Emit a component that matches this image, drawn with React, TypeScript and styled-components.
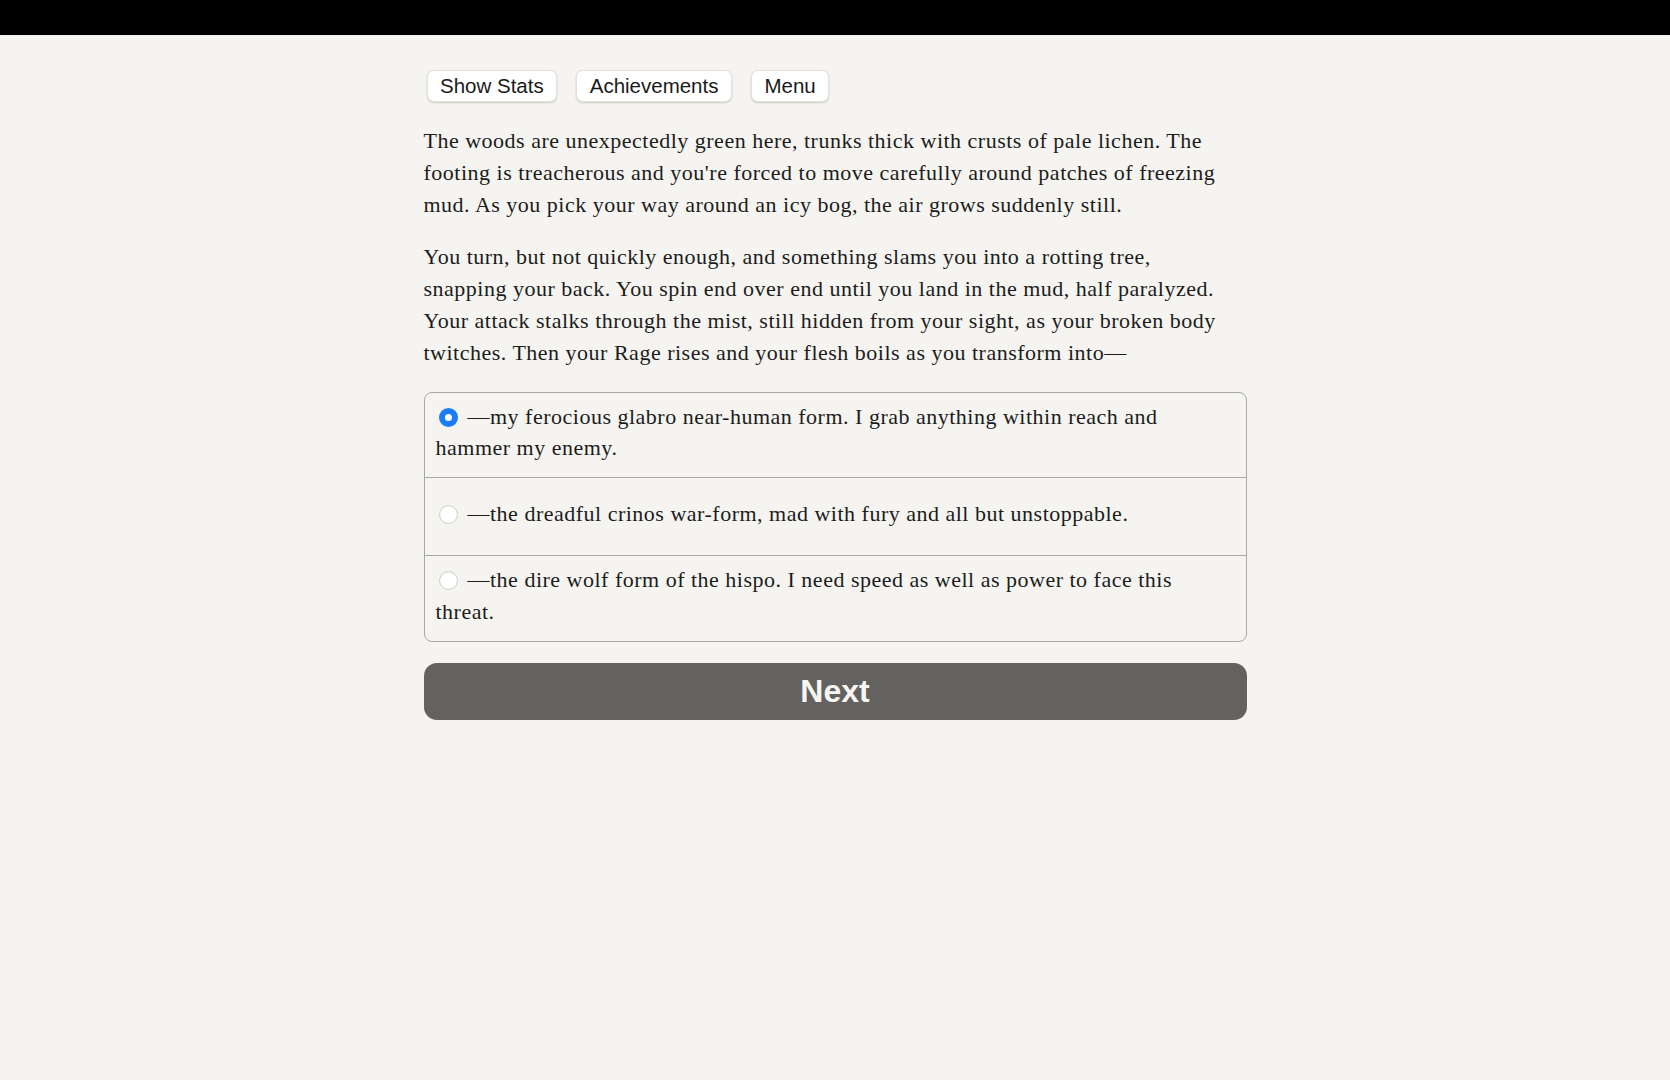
import React, { useState } from "react";
import styled, { createGlobalStyle } from "styled-components";

const GlobalStyle = createGlobalStyle`
  html, body {
    margin: 0;
    padding: 0;
    background: #f5f4f0;
  }
  body {
    font-family: "Liberation Serif", serif;
    color: #1c1c1c;
  }
`;

const choices = [
  "—my ferocious glabro near-human form. I grab anything within reach and hammer my enemy.",
  "—the dreadful crinos war-form, mad with fury and all but unstoppable.",
  "—the dire wolf form of the hispo. I need speed as well as power to face this threat.",
];

export default function App() {
  const [selected, setSelected] = useState(0);

  return (
    <>
      <GlobalStyle />
      <TopBar />
      <Page>
        <Toolbar>
          <ToolButton>Show Stats</ToolButton>
          <ToolButton>Achievements</ToolButton>
          <ToolButton>Menu</ToolButton>
        </Toolbar>
        <Story>
          <Paragraph>
            The woods are unexpectedly green here, trunks thick with crusts of pale lichen. The
            footing is treacherous and you're forced to move carefully around patches of freezing
            mud. As you pick your way around an icy bog, the air grows suddenly still.
          </Paragraph>
          <Paragraph>
            You turn, but not quickly enough, and something slams you into a rotting tree,
            snapping your back. You spin end over end until you land in the mud, half paralyzed.
            Your attack stalks through the mist, still hidden from your sight, as your broken body
            twitches. Then your Rage rises and your flesh boils as you transform into—
          </Paragraph>
        </Story>
        <ChoiceList>
          {choices.map((text, i) => (
            <Choice key={i} onClick={() => setSelected(i)}>
              <ChoiceText>
                <Radio $checked={selected === i} />
                {text}
              </ChoiceText>
            </Choice>
          ))}
        </ChoiceList>
        <NextButton>Next</NextButton>
      </Page>
    </>
  );
}

const TopBar = styled.div`
  height: 35px;
  background: #000;
`;

const Page = styled.main`
  max-width: 823px;
  margin: 0 auto;
  padding-top: 35px;
`;

const Toolbar = styled.div`
  display: flex;
  gap: 19px;
  padding-left: 3px;
`;

const ToolButton = styled.button`
  height: 32px;
  padding: 0 12.5px;
  background: #fff;
  border: 1px solid #e4e2dd;
  border-radius: 7px;
  box-shadow: 0 1px 2px rgba(0, 0, 0, 0.18);
  font-family: "Liberation Sans", Arial, sans-serif;
  font-size: 20.5px;
  color: #1a1a1a;
  cursor: pointer;
`;

const Story = styled.div`
  margin-top: 23px;
  padding-right: 10px;
`;

const Paragraph = styled.p`
  margin: 0 0 21px;
  font-size: 22px;
  line-height: 31.8px;
  letter-spacing: 0.5px;
`;

const ChoiceList = styled.div`
  margin-top: 23px;
  border: 1px solid #a8a8a6;
  border-radius: 8px;
  overflow: hidden;
`;

const Choice = styled.label`
  display: flex;
  align-items: center;
  min-height: 78px;
  box-sizing: border-box;
  padding: 8px 11px 13px;
  cursor: pointer;

  & + & {
    border-top: 1px solid #a8a8a6;
  }
`;

const ChoiceText = styled.div`
  font-size: 22px;
  line-height: 31.8px;
  letter-spacing: 0.5px;
`;

const Radio = styled.span<{ $checked: boolean }>`
  display: inline-block;
  box-sizing: border-box;
  width: 19px;
  height: 19px;
  margin: 0 10px 0 3px;
  vertical-align: -3px;
  border-radius: 50%;
  background: #fff;
  border: ${(p) => (p.$checked ? "6px solid #1b7cf6" : "1px solid #cfcfcf")};
  box-shadow: ${(p) => (p.$checked ? "none" : "inset 0 1px 1px rgba(0,0,0,0.06)")};
`;

const NextButton = styled.button`
  display: block;
  width: 100%;
  height: 57px;
  margin-top: 21px;
  background: #636260;
  border: none;
  border-radius: 13px;
  font-family: "Liberation Sans", Arial, sans-serif;
  font-weight: bold;
  font-size: 32px;
  color: #f7f6f2;
  cursor: pointer;
`;
